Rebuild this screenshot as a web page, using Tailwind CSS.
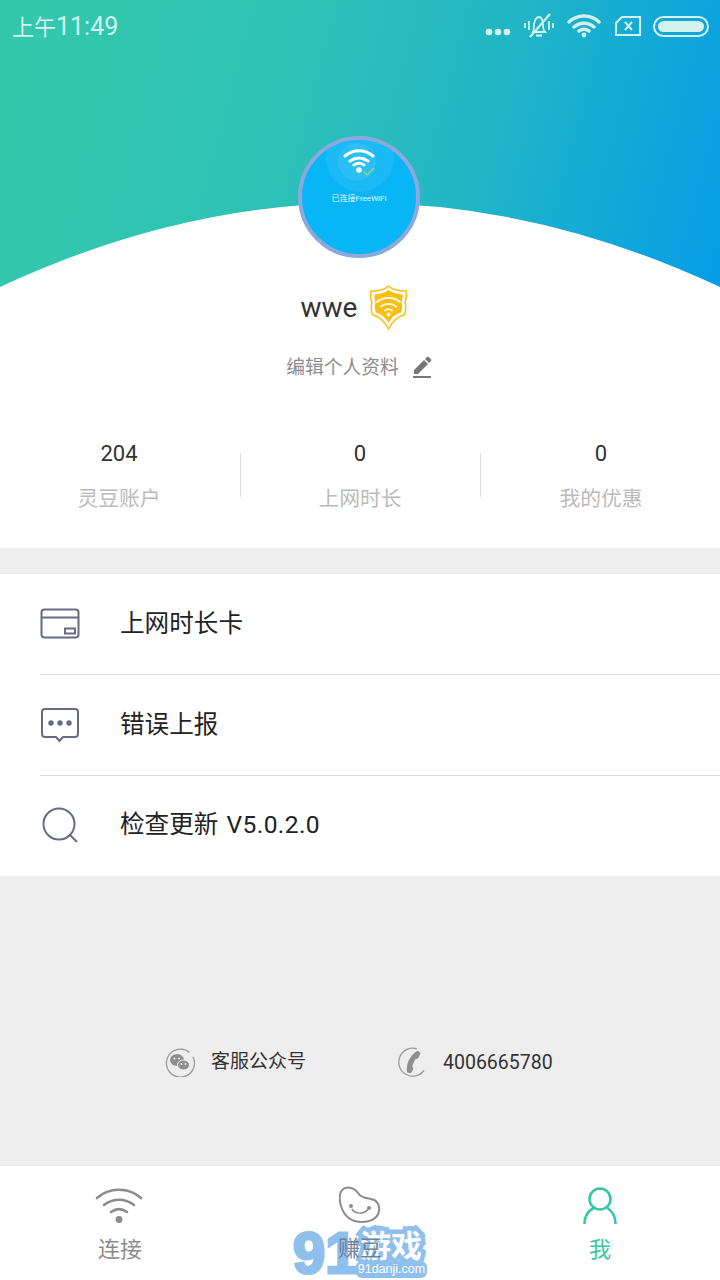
<!DOCTYPE html>
<html lang="zh">
<head>
<meta charset="UTF-8">
<meta name="viewport" content="width=device-width, initial-scale=1.0">
<script src="https://cdn.jsdelivr.net/npm/@tailwindcss/browser@4"></script>
<title>我</title>
</head>
<body>
<div class="relative flex flex-col w-[720px] h-[1280px] overflow-hidden bg-[#eeeeee] font-['Roboto','Noto_Sans_CJK_SC',sans-serif]">

  <!-- profile -->
  <section class="relative flex flex-col items-center h-[548px] shrink-0 bg-white">
    <div class="absolute inset-x-0 top-0 h-[288px] bg-[linear-gradient(105deg,#34c8ab_0%,#2fc3b4_35%,#22b6c6_65%,#049de6_100%)]">
      <svg class="absolute inset-0" width="720" height="288" viewBox="0 0 720 288"><path d="M0 287Q360 119 720 287V288H0Z" fill="#fff"/></svg>
    </div>

    <!-- status bar -->
    <div class="relative flex items-center justify-between w-full h-[52px] pl-[12px] pr-[11px] text-[#d3f2ee]">
      <span class="mt-[2px] text-[25px]"><span class="text-[22px]">上午</span>11:49</span>
      <div class="flex items-center">
        <svg width="26" height="8" viewBox="0 0 26 8" class="mt-[12px]" fill="currentColor"><circle cx="4" cy="4" r="3.300"/><circle cx="13" cy="4" r="3.300"/><circle cx="22" cy="4" r="3.300"/></svg>
        <svg width="30" height="26" viewBox="0 0 30 26" class="ml-[13px]" fill="none" stroke="currentColor" stroke-width="1.800"><path d="M9 19h12c-2-2-2-4-2-8 0-4-2-7-4-7s-4 2-5 7c0 4 0 6-1 8ZM12 22.500h6M1 10v5M5 8v9M25 8v9M29 10v5"/><path d="M6 24 26 1" stroke-width="2.200"/></svg>
        <svg width="34" height="24" viewBox="0 0 34 24" class="ml-[13px]" fill="none" stroke="currentColor" stroke-width="3.400" stroke-linecap="round"><path d="M2 8C10 0 24 0 32 8M7 13c6-5 14-5 20 0M12 17c3-2 7-2 10 0"/><circle cx="17" cy="21" r="2.400" fill="currentColor" stroke="none"/></svg>
        <svg width="28" height="22" viewBox="0 0 28 22" class="ml-[13px]" fill="none" stroke="currentColor" stroke-width="2"><path d="M8 2h18v18H2V8Z"/><path d="M11 7l7 8M18 7l-7 8" stroke-width="2"/></svg>
        <div class="ml-[11px] w-[56px] h-[21px] p-[3px] rounded-full border-2 border-current"><div class="h-full rounded-full bg-current"></div></div>
      </div>
    </div>

    <!-- avatar -->
    <div class="relative mt-[84px] ml-[-2px] w-[122px] h-[122px] shrink-0 rounded-full border-[4px] border-[#8aa9dc] bg-[#08b5f6] overflow-hidden">
      <div class="absolute left-[36px] top-[3px] w-[38px] h-[38px] rounded-full bg-white/8"></div>
      <div class="absolute left-[24px] top-[-16px] w-[68px] h-[68px] rounded-full bg-white/8"></div>
      <svg class="absolute left-[41px] top-[8px]" width="32" height="26" viewBox="0 0 32 26" fill="none" stroke="#fff" stroke-width="3" stroke-linecap="round"><path d="M2 8C10 1 22 1 30 8M7 13c6-4 12-4 18 0M11 17c3-2 7-2 10 0"/><circle cx="16" cy="22" r="2.800" fill="#fff" stroke="none"/></svg>
      <svg class="absolute left-[60px] top-[27px]" width="13" height="10" viewBox="0 0 13 10" fill="none" stroke="#8fdc6a" stroke-width="1.400"><path d="M1 4l4 4 7-7"/></svg>
      <p class="absolute inset-x-0 top-[53px] text-center text-[8px] leading-[12px] text-white/90">已连接FreeWiFi</p>
    </div>

    <!-- name -->
    <div class="relative flex items-center mt-[27px] h-[46px] ml-[-11px]">
      <span class="text-[28px] text-[#333333]">wwe</span>
      <svg class="ml-[12px]" width="39" height="46" viewBox="0 0 39 46"><path d="M19.500 1C23 4.500 29 6 37 6c1 5 .5 8-1 11 1 4 2 8-1 13-4 1-11 5-15.500 14C15 35 8 31 4 30 1 25 2 21 3 17 1.500 14 1 11 2 6c8 0 14-1.500 17.500-5Z" fill="#fff" stroke="#fdbe14" stroke-width="1.500"/><path d="M19.500 5C23 7.500 28 9 33.500 9.500c.5 3-.2 5.500-1 8 .8 3 1.200 6-.5 10-4 1-9 4-12.500 10.500C16 31.500 11 28.500 7 27.500c-1.700-4-1.300-7-.5-10-.8-2.500-1.500-5-1-8C11 9 16 7.500 19.500 5Z" fill="#fdbe14"/><g fill="none" stroke="#fff" stroke-width="1.800" stroke-linecap="round"><path d="M8 17c6-5.500 17-5.500 23 0M12 21.500c4-3.600 11-3.600 15 0M16 25.500c2-1.600 5-1.600 7 0"/></g><circle cx="19.500" cy="29.500" r="1.900" fill="#fff"/></svg>
    </div>

    <!-- edit -->
    <div class="relative flex items-center mt-[20px] h-[34px] text-[#8d8d8d] ml-[-2px]">
      <span class="text-[18.800px]">编辑个人资料</span>
      <svg class="ml-[13px] mb-[3px]" width="20" height="22" viewBox="0 0 20 22" fill="#777777"><path d="M2 14 12 4l4 4L6 18H2ZM13 3l2-2a1.200 1.200 0 0 1 1.700 0l2.300 2.300a1.200 1.200 0 0 1 0 1.700l-2 2Z"/><rect x="1" y="20" width="18" height="2"/></svg>
    </div>

    <!-- stats -->
    <div class="relative grid grid-cols-3 w-full mt-[54px]">
      <div class="flex flex-col items-center h-[80px] pr-[2px]">
        <span class="text-[22px] leading-[30px] text-[#333333]">204</span>
        <span class="mt-[15px] text-[20.800px] leading-[30px] text-[#bbbbbb]">灵豆账户</span>
      </div>
      <div class="flex flex-col items-center h-[80px] relative before:absolute before:left-0 before:top-[14px] before:h-[44px] before:w-px before:bg-[#dddddd] after:absolute after:right-[-1px] after:top-[14px] after:h-[44px] after:w-px after:bg-[#dddddd]">
        <span class="text-[22px] leading-[30px] text-[#333333]">0</span>
        <span class="mt-[15px] text-[20.800px] leading-[30px] text-[#bbbbbb]">上网时长</span>
      </div>
      <div class="flex flex-col items-center h-[80px] pl-[2px]">
        <span class="text-[22px] leading-[30px] text-[#333333]">0</span>
        <span class="mt-[15px] text-[20.800px] leading-[30px] text-[#bbbbbb]">我的优惠</span>
      </div>
    </div>
  </section>

  <!-- menu -->
  <ul class="mt-[26px] bg-white shrink-0 pl-[40px]">
    <li class="flex items-center h-[101px] border-b border-[#dddddd]">
      <svg width="40" height="32" viewBox="0 0 40 32" fill="none" stroke="#676b85" stroke-width="2"><rect x="1.500" y="1.500" width="37" height="28" rx="3"/><path d="M1.500 9.500h37"/><rect x="25" y="20.500" width="10" height="5"/></svg>
      <span class="ml-[40px] text-[24.600px] text-[#222222]">上网时长卡</span>
    </li>
    <li class="flex items-center h-[101px] border-b border-[#dddddd]">
      <svg width="40" height="36" viewBox="0 0 40 36" fill="none" stroke="#676b85" stroke-width="2"><path d="M5 2h30a3 3 0 0 1 3 3v22a3 3 0 0 1-3 3H23l-3.500 4-3.500-4H5a3 3 0 0 1-3-3V5a3 3 0 0 1 3-3Z"/><g fill="#676b85" stroke="none"><circle cx="11" cy="16" r="2.700"/><circle cx="20" cy="16" r="2.700"/><circle cx="29" cy="16" r="2.700"/></g></svg>
      <span class="ml-[40px] text-[24.600px] text-[#222222]">错误上报</span>
    </li>
    <li class="flex items-center h-[100px]">
      <svg width="40" height="38" viewBox="0 0 40 38" fill="none" stroke="#676b85" stroke-width="2"><circle cx="19" cy="17" r="15.500"/><path d="M30 28l7 7"/></svg>
      <span class="ml-[40px] mt-[-1px] text-[24.600px] text-[#222222]">检查更新 <span class="ml-[2px] tracking-[0.4px]">V5.0.2.0</span></span>
    </li>
  </ul>

  <!-- contact -->
  <div class="flex-1 pl-[165px] pt-[171px]">
    <div class="flex items-center h-[30px]">
      <svg width="30" height="30" viewBox="0 0 30 30"><path d="M24.500 5.500A14 14 0 1 0 28 10" fill="none" stroke="#9a9a9a" stroke-width="1.300"/><ellipse cx="12" cy="13" rx="7" ry="6" fill="#8f8f8f"/><ellipse cx="18.500" cy="18" rx="6" ry="5" fill="#8f8f8f" stroke="#eeeeee"/><circle cx="9.500" cy="11.500" r="1" fill="#eeeeee"/><circle cx="14" cy="11.500" r="1" fill="#eeeeee"/><circle cx="16.500" cy="17" r=".9" fill="#eeeeee"/><circle cx="20.500" cy="17" r=".9" fill="#eeeeee"/></svg>
      <span class="ml-[16px] text-[19px] text-[#333333]">客服公众号</span>
      <svg class="ml-[92px]" width="30" height="30" viewBox="0 0 30 30"><path d="M19 1.800A14 14 0 1 0 26 23.500" fill="none" stroke="#9a9a9a" stroke-width="1.300"/><path d="M19 4c1.500 .3 3 1.200 3.500 2.500l-2.500 5c-.7 .5-1.500 .5-2.200 .3-1.800 2.800-3 5.500-3.600 8.200 .6 .5 1.100 1.100 1.300 1.800l-2.500 4.200c-1.500 .4-3 0-4-1C8 18 11 9 19 4Z" fill="#8f8f8f"/></svg>
      <span class="ml-[15px] mt-[1px] text-[19.500px] text-[#333333]">4006665780</span>
    </div>
  </div>

  <!-- tabs -->
  <nav class="relative grid grid-cols-3 h-[114px] shrink-0 bg-white">
    <a class="flex flex-col items-center text-[#8c8c8c]">
      <svg class="mt-[21px] ml-[-2px]" width="48" height="37" viewBox="0 0 48 37" fill="none" stroke="#8c8c8c" stroke-width="2.600" stroke-linecap="round"><path d="M2 11C14 0 34 0 46 11M9 18c9-7 21-7 30 0M16 25c5-3.500 11-3.500 16 0"/><circle cx="24" cy="32.500" r="3.400" fill="#8c8c8c" stroke="none"/></svg>
      <span class="mt-[10px] text-[22px] leading-[32px]">连接</span>
    </a>
    <a class="flex flex-col items-center text-[#8c8c8c]">
      <svg class="mt-[20px]" width="42" height="38" viewBox="0 0 42 38" fill="none" stroke="#8c8c8c" stroke-width="2"><path d="M3 4c4-4 12-3 16 3 3 5 8 5 13 6 6 1 9 6 8 12-1 7-8 11-17 11C12 36 5 30 2 20 0 13 0 8 3 4Z"/><path d="M13 23c3 5 12 6 16 0" stroke-width="1.500"/><g fill="#8c8c8c" stroke="none"><circle cx="12" cy="20" r="2"/><circle cx="30" cy="22" r="2"/></g></svg>
      <span class="relative z-10 mt-[9px] text-[22px] leading-[32px] text-[#66768a]/90">赚豆</span>
    </a>
    <a class="flex flex-col items-center text-[#35c8a8]">
      <svg class="mt-[21px]" width="34" height="37" viewBox="0 0 34 37" fill="none" stroke="#35c8a8" stroke-width="2.600" stroke-linecap="round"><circle cx="17" cy="12" r="10.500"/><path d="M1.500 36C2 29 5 24 10 21.500M32.500 36C32 29 29 24 25 21.500"/></svg>
      <span class="mt-[10px] text-[22px] leading-[32px]">我</span>
    </a>

    <!-- watermark -->
    <div class="absolute left-[293px] top-[60px] w-[134px] h-[52px]">
      <span class="absolute left-0 top-[1px] text-[58px] leading-[52px] font-bold text-[#8fbfec] [-webkit-text-stroke:3px_#8fbfec] font-['Liberation_Sans']">91</span>
      <span class="absolute left-[67px] top-[-1px] text-[31px] leading-[44px] font-bold text-white whitespace-nowrap [paint-order:stroke] [-webkit-text-stroke:9px_#8fbfec]">游戏</span>
      <div class="absolute left-[63px] top-[35px] w-[71px] h-[17px] rounded-[6px] bg-[#8fbfec] text-white text-[12.500px] leading-[17px] text-center font-['Liberation_Sans']">91danji.com</div>
    </div>
  </nav>
</div>
</body>
</html>
